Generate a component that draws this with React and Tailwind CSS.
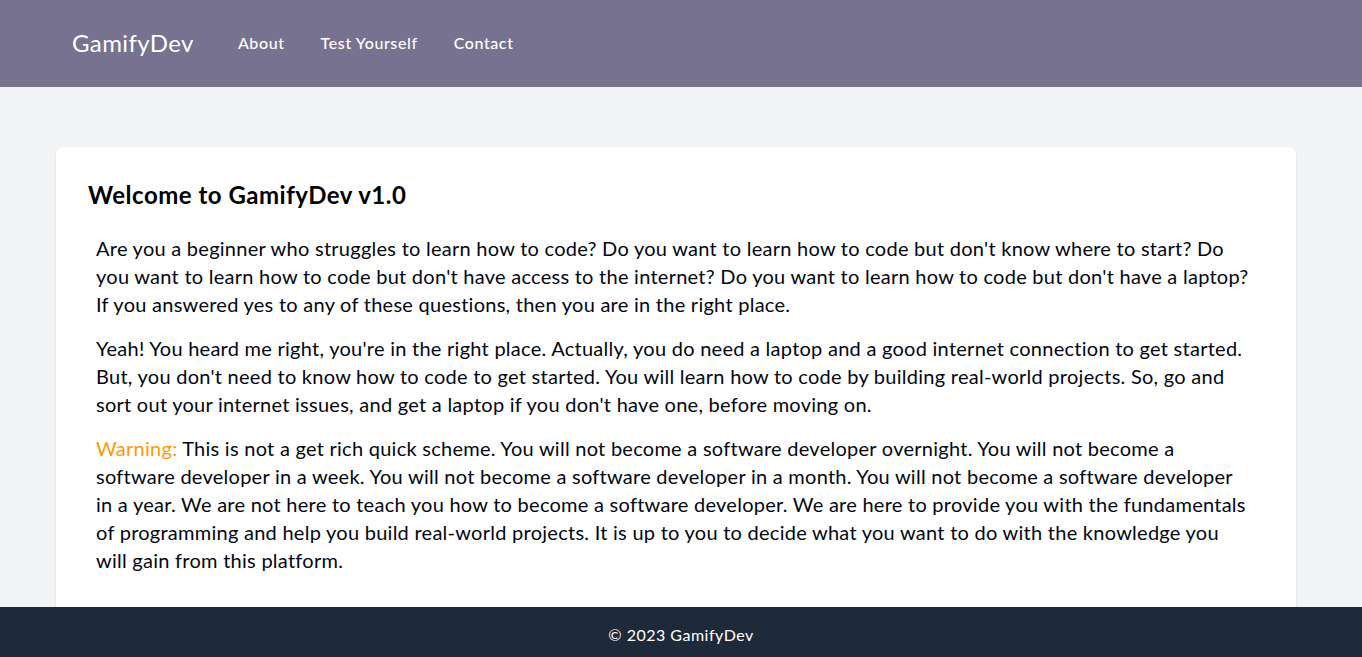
const navLinks = ['About', 'Test Yourself', 'Contact'];

function Navbar() {
  return (
    <nav className="flex h-[87px] shrink-0 items-center bg-[#76728f] pb-[2px] pl-[72px] text-white">
      <a href="#" className="mr-11 text-2xl tracking-[0.4px]">GamifyDev</a>
      <ul className="flex items-center gap-9">
        {navLinks.map((link) => (
          <li key={link}>
            <a href="#" className="text-base font-medium tracking-[0.6px]">{link}</a>
          </li>
        ))}
      </ul>
    </nav>
  );
}

function Welcome() {
  return (
    <section className="ml-14 mr-[66px] min-h-[980px] rounded-lg bg-white p-8 shadow-sm">
      <h1 className="mb-[23px] text-2xl font-bold tracking-[0.5px] text-black">Welcome to GamifyDev v1.0</h1>
      <div className="px-2 text-xl tracking-[0.26px] text-gray-950">
        <p className="mb-4">
          Are you a beginner who struggles to learn how to code? Do you want to learn how to code but don't know where to start? Do
          <br />
          you want to learn how to code but don't have access to the internet? Do you want to learn how to code but don't have a laptop?
          <br />
          If you answered yes to any of these questions, then you are in the right place.
        </p>
        <p className="mb-4">
          Yeah! You heard me right, you're in the right place. Actually, you do need a laptop and a good internet connection to get started.
          <br />
          But, you don't need to know how to code to get started. You will learn how to code by building real-world projects. So, go and
          <br />
          sort out your internet issues, and get a laptop if you don't have one, before moving on.
        </p>
        <p className="mb-4">
          <span className="text-amber-500">Warning:</span> This is not a get rich quick scheme. You will not become a software developer overnight. You will not become a
          <br />
          software developer in a week. You will not become a software developer in a month. You will not become a software developer
          <br />
          in a year. We are not here to teach you how to become a software developer. We are here to provide you with the fundamentals
          <br />
          of programming and help you build real-world projects. It is up to you to decide what you want to do with the knowledge you
          <br />
          will gain from this platform.
        </p>
      </div>
    </section>
  );
}

export default function App() {
  return (
    <div className="flex h-screen flex-col overflow-y-auto bg-gray-100 font-['Lato',sans-serif]">
      <Navbar />
      <main className="shrink-0 pb-[53px] pt-[60px]">
        <Welcome />
      </main>
      <footer className="sticky bottom-0 flex h-[50px] shrink-0 items-center justify-center bg-gray-800 pt-[5px] text-base tracking-[0.5px] text-white">
        © 2023 GamifyDev
      </footer>
    </div>
  );
}
